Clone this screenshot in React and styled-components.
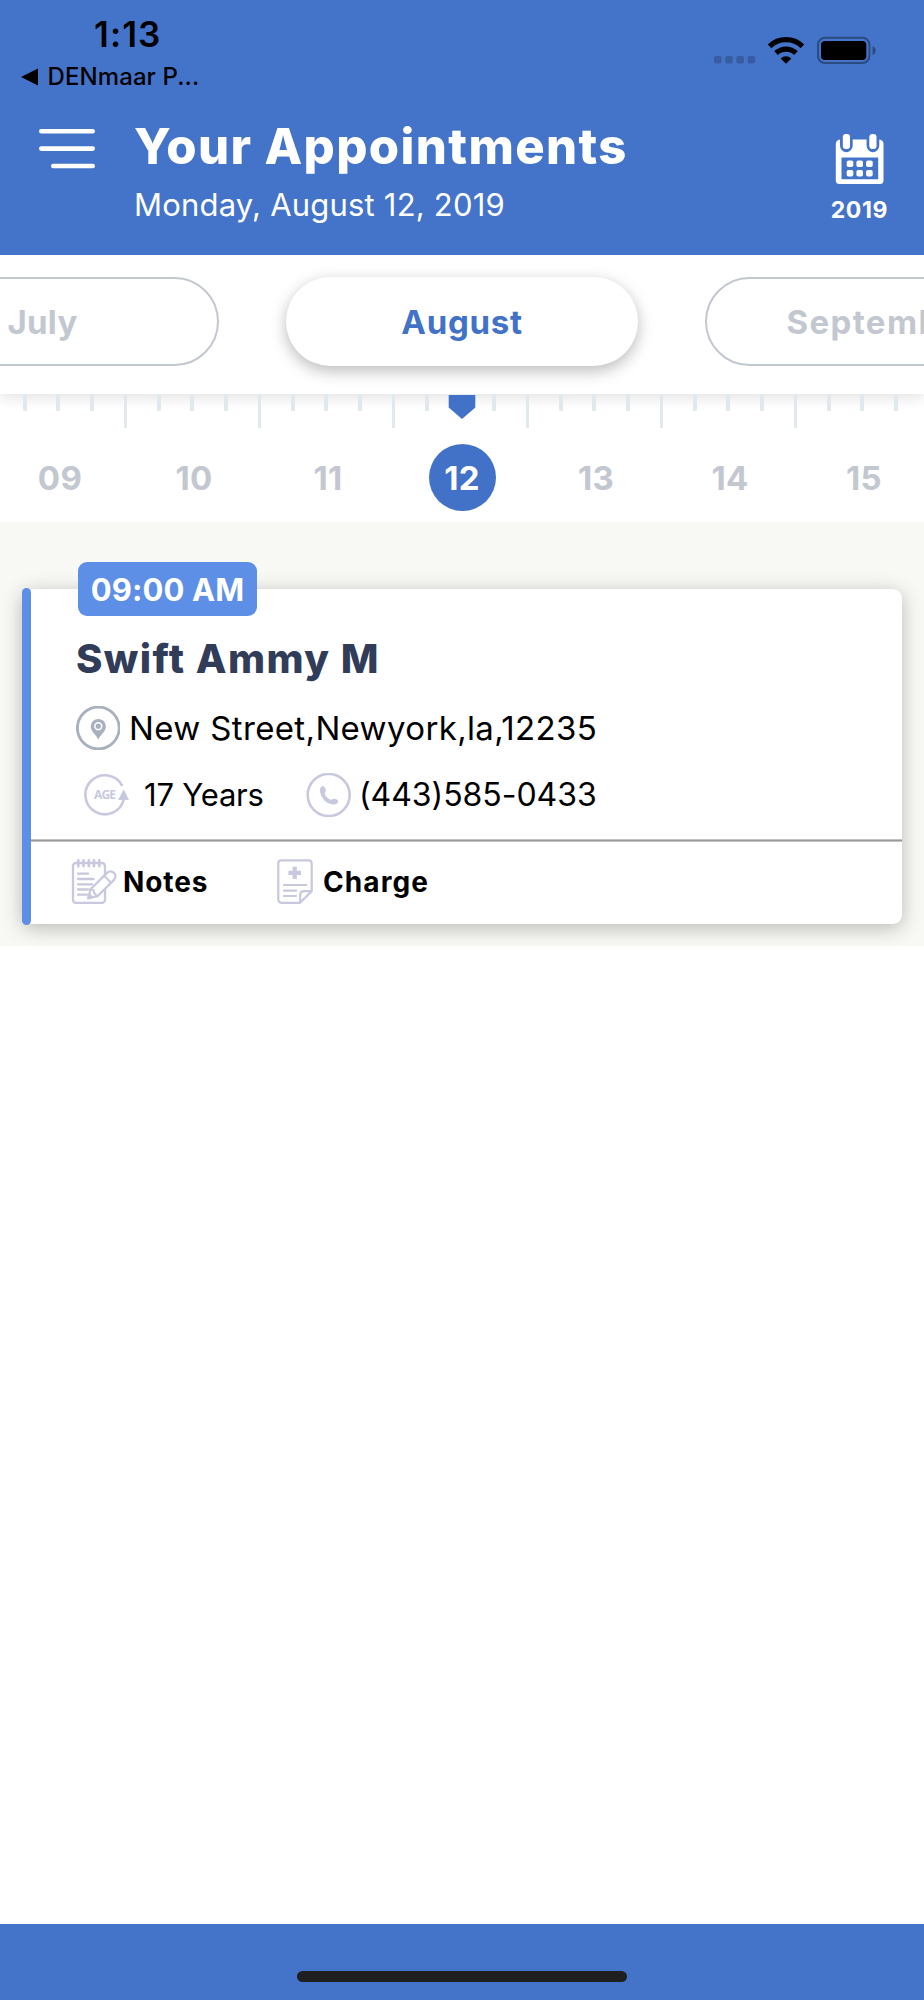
import React from 'react';
import styled, { createGlobalStyle } from 'styled-components';

const GlobalStyle = createGlobalStyle`
  body {
    margin: 0;
    background: #fff;
    font-family: Inter, "Liberation Sans", sans-serif;
  }
  * {
    box-sizing: border-box;
  }
  svg {
    display: block;
    flex: none;
  }
`;

const Screen = styled.div`
  width: 924px;
  height: 2000px;
  display: flex;
  flex-direction: column;
  overflow: hidden;
  background: #fff;
`;

const Text = styled.span`
  display: block;
  white-space: nowrap;
  font-size: ${(p) => p.$size}px;
  line-height: ${(p) => p.$line || 40}px;
  font-weight: ${(p) => p.$weight || 400};
  color: ${(p) => p.$color || '#000'};
  letter-spacing: ${(p) => p.$spacing || 0}px;
`;

const Header = styled.header`
  height: 254.6px;
  flex: none;
  background: #4474c9;
`;

const StatusBar = styled.div`
  height: 96px;
  display: flex;
  justify-content: space-between;
  padding: 14px 48px 0 21px;
`;

const Clock = styled.div`
  padding-left: 73px;
`;

const BackLink = styled.div`
  display: flex;
  align-items: center;
  gap: 9.5px;
  margin-top: 3px;
`;

const Signals = styled.div`
  display: flex;
  align-items: flex-start;
  padding-top: 22px;
`;

const TitleBar = styled.div`
  display: flex;
  align-items: flex-start;
  padding: 0 36px 0 39px;
`;

const MenuButton = styled.div`
  width: 95px;
  padding-top: 32px;
`;

const Titles = styled.div`
  flex: 1;
  padding-top: 26px;
`;

const YearPicker = styled.div`
  display: flex;
  flex-direction: column;
  align-items: center;
  padding-top: 37px;
`;

const Months = styled.nav`
  position: relative;
  z-index: 1;
  height: 139.4px;
  flex: none;
  display: flex;
  justify-content: center;
  gap: 67px;
  padding-top: 22px;
  background: #fff;
  box-shadow: 0 4px 13px rgba(0, 0, 0, 0.11);
  clip-path: inset(0 0 -24px 0);
`;

const Month = styled.div`
  flex: none;
  width: 352.5px;
  height: 89.5px;
  display: flex;
  align-items: center;
  justify-content: center;
  padding-top: 2px;
  border-radius: 45px;
  background: #fff;
  border: ${(p) => (p.$active ? 'none' : '2px solid #c3c7d0')};
  box-shadow: ${(p) => (p.$active ? '0 5px 16px rgba(0, 0, 0, 0.27)' : 'none')};
`;

const Days = styled.div`
  position: relative;
  z-index: 2;
  height: 128px;
  flex: none;
`;

const Ruler = styled.div`
  display: flex;
  height: 50px;
  margin-left: -7px;
`;

const Tick = styled.div`
  flex: none;
  width: 33.5px;
  height: ${(p) => (p.$long ? 34 : 17)}px;
  border-right: ${(p) => (p.$long ? 3 : 4)}px solid #e0e9ed;
`;

const Marker = styled.svg`
  position: absolute;
  left: 448px;
  top: 1px;
`;

const DayRow = styled.div`
  display: flex;
  justify-content: center;
`;

const Day = styled.div`
  flex: none;
  width: 134px;
  height: 67px;
  display: flex;
  align-items: center;
  justify-content: center;
`;

const DayCircle = styled.div`
  width: 67px;
  height: 67px;
  display: flex;
  align-items: center;
  justify-content: center;
  padding-top: 1px;
  border-radius: 50%;
  background: ${(p) => (p.$active ? '#4172c8' : 'transparent')};
`;

const Appointments = styled.main`
  height: 424px;
  flex: none;
  padding: 67px 22px 0;
  background: #f8f9f4;
`;

const Card = styled.article`
  position: relative;
  height: 335px;
  padding-left: 9px;
  border-radius: 9px;
  background: #fff;
  box-shadow: 0 4px 20px rgba(0, 0, 0, 0.26);
`;

const Stripe = styled.div`
  position: absolute;
  left: 0;
  top: -1px;
  width: 9px;
  height: 337px;
  border-radius: 5px;
  background: #5e8fe7;
`;

const TimeBadge = styled.div`
  position: absolute;
  left: 56px;
  top: -26.5px;
  width: 179px;
  height: 54px;
  display: flex;
  align-items: center;
  justify-content: center;
  padding-top: 1px;
  border-radius: 9px;
  background: #5e8fe7;
`;

const Details = styled.div`
  height: 250px;
  padding: 50px 0 0 45px;
`;

const Row = styled.div`
  display: flex;
  align-items: center;
  height: 44px;
  margin-top: ${(p) => p.$top}px;
`;

const Field = styled.div`
  display: flex;
  align-items: center;
  gap: ${(p) => p.$gap}px;
  margin-left: ${(p) => p.$indent || 0}px;
  width: ${(p) => (p.$width ? p.$width + 'px' : 'auto')};
`;

const Divider = styled.div`
  height: 3px;
  background: #999;
  border: solid #c2c2c2;
  border-width: 1px 0;
`;

const Actions = styled.div`
  height: 82px;
  display: flex;
  align-items: center;
  padding: 0 0 2px 40px;
`;

const Footer = styled.footer`
  height: 76px;
  flex: none;
  margin-top: auto;
  padding-top: 47px;
  background: #4474c9;
`;

const HomeBar = styled.div`
  width: 330px;
  height: 11px;
  margin: 0 auto;
  border-radius: 6px;
  background: #1f1f1f;
`;

const months = [
  { name: 'July', spacing: 0.3 },
  { name: 'August', spacing: 0.7 },
  { name: 'September', spacing: 1.4 }
];
const days = ['09', '10', '11', '12', '13', '14', '15'];
const ticks = Array.from({ length: 28 }, (_, i) => i);

const PinIcon = () => (
  <svg width="44" height="44" viewBox="0 0 44 44">
    <circle cx="22.300" cy="22" r="20.900" fill="none" stroke="#a9b1bf" strokeWidth="2.900" />
    <path d="M22.300 33.500C20.500 29 14.700 25.500 14.700 20.400a7.600 7.500 0 0 1 15.200 0c0 5.100-5.800 8.600-7.600 13.100z" fill="#a9b1bf" />
    <circle cx="22.300" cy="20.200" r="3.400" fill="#a9b1bf" stroke="#fff" strokeWidth="1.500" />
  </svg>
);

const AgeIcon = () => (
  <svg width="46" height="44" viewBox="0 0 46 44">
    <path d="M39.800 26.500A19.500 19.500 0 1 1 38.300 13" fill="none" stroke="#c8c8de" strokeWidth="2.600" />
    <path d="M39.700 16.200 45 27H34.200z" fill="#c8c8de" />
    <text x="10" y="26.300" textLength="22" fontFamily="Open Sans, sans-serif" fontSize="12" fontWeight="700" fill="#c8c8de">AGE</text>
  </svg>
);

const PhoneIcon = () => (
  <svg width="45" height="44" viewBox="0 0 45 44">
    <circle cx="22.700" cy="22" r="21" fill="none" stroke="#c8c8de" strokeWidth="2.600" />
    <path
      d="M14 17.500C14 14.500 15.300 13 17 13.200c2 .3 2.700 2.300 2.800 4.300.1 1.600-1.200 2.200-1 3.300.7 2.700 3.200 5.200 5.900 5.900 1.100.3 1.900-1 3.500-1 2 .1 4 .9 3.900 2.700-.1 2-2.300 3.200-5.100 3C20 31 14.200 24.500 14 17.500z"
      fill="#c8c8de"
    />
  </svg>
);

const NotesIcon = () => (
  <svg width="46" height="47" viewBox="0 0 46 47" fill="none" stroke="#c8c8de" strokeWidth="2.300" strokeLinecap="round" strokeLinejoin="round">
    <rect x="2" y="5" width="32" height="39.800" rx="3" />
    <path d="M7.300 2.200v6M12.500 2.200v6M17.800 2.200v6M23 2.200v6M28.300 2.200v6" strokeWidth="2.600" />
    <path d="M7 15.700h10M7 21h15.500M7 26.300h14M7 31.500h10M7 36.700h9" />
    <path d="M17.400 40.200 19.500 31.300 36.200 14.600c4.400-4 11 2.500 7 7L26.500 38.200z" fill="#fff" />
    <path d="M33.200 17.800l7 7M19.500 31.300l3 .8.800 3.200 3.200 2.900" strokeWidth="2" />
    <path d="M17.400 40.200l.9-3.500 2.600 2.500z" fill="#c8c8de" />
  </svg>
);

const ChargeIcon = () => (
  <svg width="38" height="47" viewBox="0 0 38 47" fill="none" stroke="#c8c8de" strokeWidth="2.200" strokeLinecap="round" strokeLinejoin="round">
    <path d="M24 44.800H5.500q-3.200 0-3.200-3.200V5.500q0-3.200 3.200-3.200h27q3.200 0 3.200 3.200v27.600z" />
    <path d="M24.200 44.500v-7.300q0-4 4-4h7.300" />
    <path d="M8 27h22.300M8 32.700h12M8 38h12" />
    <path d="M16.600 8.700h4.200v4h4.200v4.200h-4.200v4h-4.200v-4h-4.200v-4.200h4.200z" fill="#c8c8de" stroke="none" />
  </svg>
);

const CalendarIcon = () => (
  <svg width="50" height="52" viewBox="-0.500 0 50 52" fill="#fff">
    <path
      fillRule="evenodd"
      d="M5.500 6.500v5.500c0 9.500 12.700 9.500 12.700 0V6.500h13.900v5.500c0 9.500 12.700 9.500 12.700 0V6.500Q49 7.300 49 11v36.500q0 3.500-3.500 3.500h-40.700q-3.500 0-3.500-3.500V11q0-3.700 4.200-4.500zM7 24.500v21.800h36.700V24.500z"
    />
    <rect x="8.300" y="1" width="7.200" height="15" rx="3" />
    <rect x="34.800" y="1" width="7.200" height="15" rx="3" />
    {[27.5, 37].map((y) =>
      [12.2, 21.9, 31.6].map((x) => <rect key={x + '-' + y} x={x} y={y} width="6.600" height="6.600" rx="1.800" />)
    )}
  </svg>
);

const StatusIcons = () => (
  <svg width="162" height="28" viewBox="0 0 162 28">
    <g fill="#375c9f">
      <rect x="0" y="20" width="7.600" height="7.400" rx="2" />
      <rect x="11.200" y="20" width="7.600" height="7.400" rx="2" />
      <rect x="22.400" y="20" width="7.600" height="7.400" rx="2" />
      <rect x="33.600" y="20" width="7.600" height="7.400" rx="2" />
    </g>
    <g fill="none" stroke="#000" strokeWidth="5.200">
      <path d="M55.600 10.300a23.500 23.500 0 0 1 32.800 0" />
      <path d="M62 17a14.600 14.600 0 0 1 20 0" />
    </g>
    <path d="M66.600 22.400a8 8 0 0 1 10.800 0L72 27.800z" fill="#000" />
    <rect x="104" y="1.700" width="51.400" height="25.300" rx="7" fill="none" stroke="#2b4a80" strokeWidth="2" />
    <rect x="107" y="5" width="45.300" height="19" rx="4" fill="#000" />
    <path d="M158.600 10c4 1.600 4 7.600 0 9.200z" fill="#2b4a80" />
  </svg>
);

function App() {
  return (
    <Screen>
      <GlobalStyle />
      <Header>
        <StatusBar>
          <div>
            <Clock>
              <Text $size={35} $line={41} $weight={600} $spacing={1.1}>1:13</Text>
            </Clock>
            <BackLink>
              <svg width="17" height="18" viewBox="0 0 17 18">
                <path d="M0 9 17 0.500v17z" fill="#000" />
              </svg>
              <Text $size={24} $line={38} $weight={450} $spacing={0.1}>DENmaar P...</Text>
            </BackLink>
          </div>
          <Signals>
            <StatusIcons />
          </Signals>
        </StatusBar>
        <TitleBar>
          <MenuButton>
            <svg width="56" height="42" viewBox="0 0 56 42" stroke="#fff" strokeWidth="4.600" strokeLinecap="round">
              <path d="M2.300 3.300h51.400M2.300 20.600h51.400M14.300 38h39.400" />
            </svg>
          </MenuButton>
          <Titles>
            <Text $size={49} $line={50} $weight={850} $color="#fff" $spacing={1.38}>Your Appointments</Text>
            <Text $size={31} $line={66} $color="#fff" $spacing={0.2}>Monday, August 12, 2019</Text>
          </Titles>
          <YearPicker>
            <CalendarIcon />
            <Text $size={23} $line={50} $weight={700} $color="#fff" $spacing={0.6}>2019</Text>
          </YearPicker>
        </TitleBar>
      </Header>

      <Months>
        {months.map((month) => {
          const active = month.name === 'August';
          return (
            <Month key={month.name} $active={active}>
              <Text $size={33} $weight={700} $color={active ? '#4172c8' : '#c3c7d0'} $spacing={month.spacing}>
                {month.name}
              </Text>
            </Month>
          );
        })}
      </Months>

      <Days>
        <Ruler>
          {ticks.map((i) => (
            <Tick key={i} $long={i % 4 === 3} />
          ))}
        </Ruler>
        <Marker width="28" height="25" viewBox="0 0 28 25">
          <path d="M0.700 0h26.600v12.500L14 24 0.700 12.500z" fill="#4172c8" />
        </Marker>
        <DayRow>
          {days.map((day) => (
            <Day key={day}>
              <DayCircle $active={day === '12'}>
                <Text $size={33} $weight={650} $color={day === '12' ? '#fff' : '#c3c7d0'} $spacing={0.3}>{day}</Text>
              </DayCircle>
            </Day>
          ))}
        </DayRow>
      </Days>

      <Appointments>
        <Card>
          <Stripe />
          <TimeBadge>
            <Text $size={31} $weight={650} $color="#fff" $spacing={0.1}>09:00 AM</Text>
          </TimeBadge>
          <Details>
            <Text $size={40} $weight={800} $color="#303c58" $spacing={1.45}>Swift Ammy M</Text>
            <Row $top={27}>
              <Field $gap={9}>
                <PinIcon />
                <Text $size={33} $spacing={0.36}>New Street,Newyork,la,12235</Text>
              </Field>
            </Row>
            <Row $top={23}>
              <Field $gap={14} $indent={8} $width={222}>
                <AgeIcon />
                <Text $size={31} $spacing={-0.2}>17 Years</Text>
              </Field>
              <Field $gap={8}>
                <PhoneIcon />
                <Text $size={32} $spacing={-0.05}>(443)585-0433</Text>
              </Field>
            </Row>
          </Details>
          <Divider />
          <Actions>
            <Field $gap={6} $width={205}>
              <NotesIcon />
              <Text $size={28} $weight={750} $spacing={0.9}>Notes</Text>
            </Field>
            <Field $gap={9}>
              <ChargeIcon />
              <Text $size={28} $weight={750} $spacing={1.1}>Charge</Text>
            </Field>
          </Actions>
        </Card>
      </Appointments>

      <Footer>
        <HomeBar />
      </Footer>
    </Screen>
  );
}

export default App;
